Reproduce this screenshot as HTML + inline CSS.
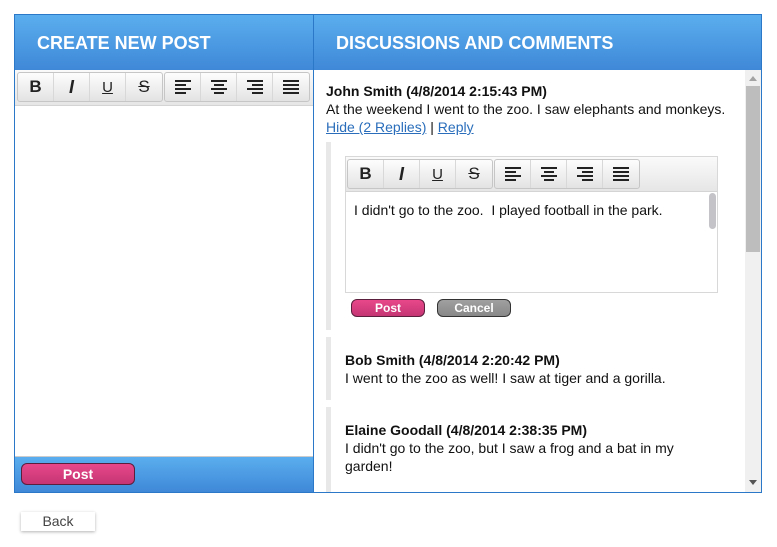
<!DOCTYPE html>
<html><head><meta charset="utf-8"><style>
*{box-sizing:border-box;margin:0;padding:0}
body{width:777px;height:547px;background:#fff;font-family:"Liberation Sans",Arial,sans-serif;position:relative;overflow:hidden}
.a{position:absolute}
.hdr{background:linear-gradient(#5aaeee,#3f88d8);color:#fff;font-weight:bold;font-size:18px;line-height:56px}
.tb{background:linear-gradient(#fafafa,#e6e6e6);border-bottom:1px solid #d4d4d4}
.grp{position:absolute;top:2px;height:30px;border:1px solid #c6c6c6;border-radius:3px;background:linear-gradient(#fdfdfd,#e3e3e3);display:flex}
.btn{width:36px;height:28px;border-right:1px solid #d8d8d8;display:flex;align-items:center;justify-content:center;font-size:17px;color:#222}
.btn:last-child{border-right:none}
.it{font-style:italic;font-weight:bold;font-size:18px}
.t{font-size:14px;color:#111;line-height:18px}
.b{font-weight:bold}
.pill{border:1px solid #5a1f3c;border-radius:6px;background:linear-gradient(#e8488a,#c53574);color:#fff;font-weight:bold;text-align:center}
a{color:#2a6ebb;text-decoration:underline}
.bar{background:#e8e8e8;width:5px}
</style></head><body>
<div class="a" style="left:14px;top:14px;width:748px;height:479px;border:1px solid #2b78c8;background:#fff"></div>
<div class="a hdr" style="left:15px;top:15px;width:298px;height:55px;padding-left:22px">CREATE NEW POST</div>
<div class="a hdr" style="left:314px;top:15px;width:447px;height:55px;padding-left:22px">DISCUSSIONS AND COMMENTS</div>
<div class="a" style="left:313px;top:15px;width:1px;height:477px;background:#2b78c8"></div>

<div class="a tb" style="left:15px;top:70px;width:298px;height:36px">
 <div class="grp" style="left:2px;width:146px">
  <div class="btn b">B</div><div class="btn it">I</div><div class="btn" style="text-decoration:underline;font-size:15px">U</div><div class="btn" style="text-decoration:line-through">S</div></div>
 <div class="grp" style="left:149px;width:146px">
  <div class="btn"><svg width="18" height="14"><g stroke="#222" stroke-width="2"><path d="M1 1h16M1 5h11M1 9h16M1 13h11"/></g></svg></div>
  <div class="btn"><svg width="18" height="14"><g stroke="#222" stroke-width="2"><path d="M1 1h16M4 5h10M1 9h16M4 13h10"/></g></svg></div>
  <div class="btn"><svg width="18" height="14"><g stroke="#222" stroke-width="2"><path d="M1 1h16M6 5h11M1 9h16M6 13h11"/></g></svg></div>
  <div class="btn"><svg width="18" height="14"><g stroke="#222" stroke-width="2"><path d="M1 1h16M1 5h16M1 9h16M1 13h16"/></g></svg></div></div>
</div>
<div class="a" style="left:15px;top:456px;width:298px;height:1px;background:#ccc"></div>
<div class="a" style="left:15px;top:457px;width:298px;height:35px;background:linear-gradient(#5aaeee,#3f88d8)"></div>
<div class="a pill" style="left:21px;top:463px;width:114px;height:22px;font-size:14px;line-height:20px">Post</div>

<div class="a t" style="left:326px;top:82px"><span class="b">John Smith (4/8/2014 2:15:43 PM)</span><br>At the weekend I went to the zoo. I saw elephants and monkeys.<br><a>Hide (2 Replies)</a> | <a>Reply</a></div>
<div class="a bar" style="left:326px;top:142px;height:188px"></div>
<div class="a" style="left:345px;top:156px;width:373px;height:137px;border:1px solid #d8d8d8"></div>
<div class="a tb" style="left:346px;top:157px;width:371px;height:35px">
 <div class="grp" style="left:1px;width:146px">
  <div class="btn b">B</div><div class="btn it">I</div><div class="btn" style="text-decoration:underline;font-size:15px">U</div><div class="btn" style="text-decoration:line-through">S</div></div>
 <div class="grp" style="left:148px;width:146px">
  <div class="btn"><svg width="18" height="14"><g stroke="#222" stroke-width="2"><path d="M1 1h16M1 5h11M1 9h16M1 13h11"/></g></svg></div>
  <div class="btn"><svg width="18" height="14"><g stroke="#222" stroke-width="2"><path d="M1 1h16M4 5h10M1 9h16M4 13h10"/></g></svg></div>
  <div class="btn"><svg width="18" height="14"><g stroke="#222" stroke-width="2"><path d="M1 1h16M6 5h11M1 9h16M6 13h11"/></g></svg></div>
  <div class="btn"><svg width="18" height="14"><g stroke="#222" stroke-width="2"><path d="M1 1h16M1 5h16M1 9h16M1 13h16"/></g></svg></div></div>
</div>
<div class="a t" style="left:354px;top:201px">I didn't go to the zoo.&nbsp; I played football in the park.</div>
<div class="a" style="left:709px;top:193px;width:7px;height:36px;background:#c4c4c8;border-radius:4px"></div>
<div class="a pill" style="left:351px;top:299px;width:74px;height:18px;font-size:12px;line-height:16px">Post</div>
<div class="a pill" style="left:437px;top:299px;width:74px;height:18px;font-size:12px;line-height:16px;background:linear-gradient(#a0a0a0,#888);border-color:#333">Cancel</div>

<div class="a bar" style="left:326px;top:337px;height:63px"></div>
<div class="a t" style="left:345px;top:351px"><span class="b">Bob Smith (4/8/2014 2:20:42 PM)</span><br>I went to the zoo as well! I saw at tiger and a gorilla.</div>
<div class="a bar" style="left:326px;top:407px;height:85px"></div>
<div class="a t" style="left:345px;top:421px"><span class="b">Elaine Goodall (4/8/2014 2:38:35 PM)</span><br>I didn't go to the zoo, but I saw a frog and a bat in my<br>garden!</div>

<div class="a" style="left:745px;top:70px;width:16px;height:422px;background:#f0f0f0"></div>
<div class="a" style="left:749px;top:76px;width:0;height:0;border-left:4px solid transparent;border-right:4px solid transparent;border-bottom:5px solid #a3a3a3"></div>
<div class="a" style="left:749px;top:480px;width:0;height:0;border-left:4px solid transparent;border-right:4px solid transparent;border-top:5px solid #555"></div>
<div class="a" style="left:746px;top:86px;width:14px;height:166px;background:#bdbdbd"></div>

<div class="a" style="left:21px;top:512px;width:74px;height:19px;background:#fff;box-shadow:0 1px 3px rgba(0,0,0,.3);font-size:14px;color:#444;text-align:center;line-height:18px">Back</div>
</body></html>
